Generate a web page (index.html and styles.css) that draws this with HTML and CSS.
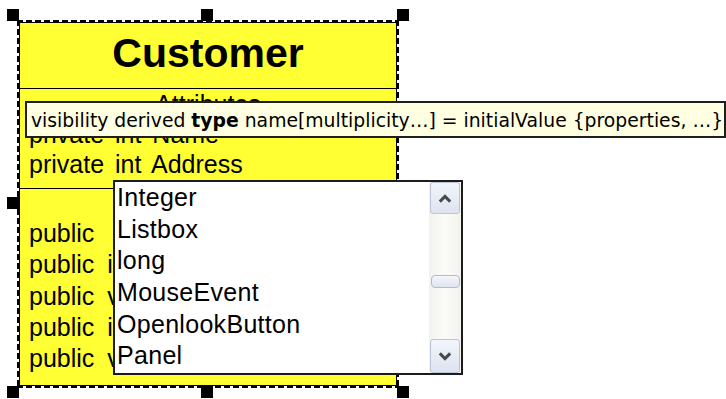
FILE: index.html
```html
<!DOCTYPE html>
<html>
<head>
<meta charset="utf-8">
<link rel="stylesheet" href="styles.css">
</head>
<body>
<div class="canvas">
  <div class="node">
    <div class="cls">
      <div class="title">Customer</div>
      <div class="sec attrs">
        <div class="label">Attributes</div>
        <div class="row">private int Name</div>
        <div class="row">private int Address</div>
      </div>
      <div class="sec ops">
        <div class="label op-label">Operations</div>
        <div class="row op">public </div>
        <div class="row op">public int getName()</div>
        <div class="row op">public void setName()</div>
        <div class="row op">public int getAddress()</div>
        <div class="row op">public void setAddress()</div>
      </div>
    </div>
    <span class="handle h-tl"></span>
    <span class="handle h-tm"></span>
    <span class="handle h-tr"></span>
    <span class="handle h-ml"></span>
    <span class="handle h-mr"></span>
    <span class="handle h-bl"></span>
    <span class="handle h-bm"></span>
    <span class="handle h-br"></span>
  </div>

  <div class="tooltip">visibility derived <b>type</b> name[multiplicity…] = initialValue {properties, …}</div>

  <div class="listbox">
    <ul class="items">
      <li>Integer</li>
      <li>Listbox</li>
      <li>long</li>
      <li>MouseEvent</li>
      <li>OpenlookButton</li>
      <li>Panel</li>
    </ul>
    <div class="scroll">
      <div class="sbtn">
        <svg width="14" height="9" viewBox="0 0 14 9"><path d="M1.8 7.6 L7 2.4 L12.2 7.6" fill="none" stroke="#4a4a4a" stroke-width="3"/></svg>
      </div>
      <div class="track"><div class="thumb"></div></div>
      <div class="sbtn sbtn-down">
        <svg width="14" height="9" viewBox="0 0 14 9"><path d="M1.8 1.4 L7 6.6 L12.2 1.4" fill="none" stroke="#4a4a4a" stroke-width="3"/></svg>
      </div>
    </div>
  </div>
</div>
</body>
</html>
```

FILE: styles.css
```css
* { box-sizing: border-box; }
html, body { margin: 0; padding: 0; background: #fff; }
body { width: 726px; height: 399px; overflow: hidden; font-family: "Liberation Sans", Arial, sans-serif; color: #000; }

.canvas { position: relative; width: 726px; height: 399px; }

.node {
  position: absolute;
  left: 17px;
  top: 20px;
  width: 382px;
  height: 368px;
  padding: 2px;
  background:
    repeating-linear-gradient(90deg, #000 0 6px, #fff 6px 9px) left top / 100% 2px no-repeat,
    repeating-linear-gradient(90deg, #000 0 6px, #fff 6px 9px) left bottom / 100% 2px no-repeat,
    repeating-linear-gradient(180deg, #000 0 6px, #fff 6px 9px) left top / 2px 100% no-repeat,
    repeating-linear-gradient(180deg, #000 0 6px, #fff 6px 9px) right top / 2px 100% no-repeat,
    #fff;
}

.cls {
  height: 100%;
  border: 1px solid #000;
  background: #ffff33;
  display: flex;
  flex-direction: column;
}

.title {
  padding: 7px 0 12px;
  line-height: 46px;
  font-size: 41px;
  font-weight: bold;
  text-align: center;
  border-bottom: 1px solid #000;
}

.sec { font-size: 25px; word-spacing: 4px; }
.attrs { padding-bottom: 9px; border-bottom: 1px solid #000; line-height: 30px; }
.label { text-align: center; }
.row { padding-left: 9px; white-space: pre; }
.op-label { line-height: 29px; }
.op { line-height: 31.25px; word-spacing: 6px; }

.handle {
  position: absolute;
  width: 12px;
  height: 12px;
  background: #000;
}
.h-tl { left: -10px; top: -11px; }
.h-tm { left: 184px; top: -11px; }
.h-tr { left: 380px; top: -11px; }
.h-ml { left: -10px; top: 177px; }
.h-mr { left: 380px; top: 177px; }
.h-bl { left: -10px; top: 366px; }
.h-bm { left: 184px; top: 366px; }
.h-br { left: 380px; top: 366px; }

.tooltip {
  position: absolute;
  left: 25px;
  top: 101px;
  width: 701px;
  height: 37px;
  border: 2px solid #1e1e1e;
  background: #ffffe1;
  padding: 2px 0 0 4px;
  font-family: "DejaVu Sans", Verdana, sans-serif;
  font-size: 18.8px;
  line-height: 31px;
  white-space: nowrap;
  overflow: hidden;
}
.tooltip b { font-weight: bold; }

.listbox {
  position: absolute;
  left: 113px;
  top: 180px;
  width: 350px;
  height: 195px;
  border: 2px solid #1c1c1c;
  background: #fff;
  display: flex;
}
.items {
  list-style: none;
  margin: 0;
  padding: 0 0 0 2px;
  flex: 1;
  font-size: 25px;
  letter-spacing: 0.3px;
  line-height: 31.66px;
  white-space: nowrap;
  overflow: hidden;
}
.scroll {
  width: 32px;
  display: flex;
  flex-direction: column;
  background: linear-gradient(90deg, #f3f3ee, #fbfbf8 50%, #f3f3ee);
  padding: 0 1px;
}
.sbtn {
  height: 32px;
  border: 1px solid #bcc5d6;
  border-radius: 3px;
  background: linear-gradient(180deg, #f2f5fb, #dde3ef);
  display: flex;
  align-items: center;
  justify-content: center;
}
.sbtn-down { height: 34px; }
.track { flex: 1; padding-top: 61px; }
.thumb {
  height: 13px;
  margin: 0 0 0 1px;
  border: 1px solid #b3bccc;
  border-radius: 4px;
  background: linear-gradient(180deg, #f4f6fa, #dfe4ee);
}
```
